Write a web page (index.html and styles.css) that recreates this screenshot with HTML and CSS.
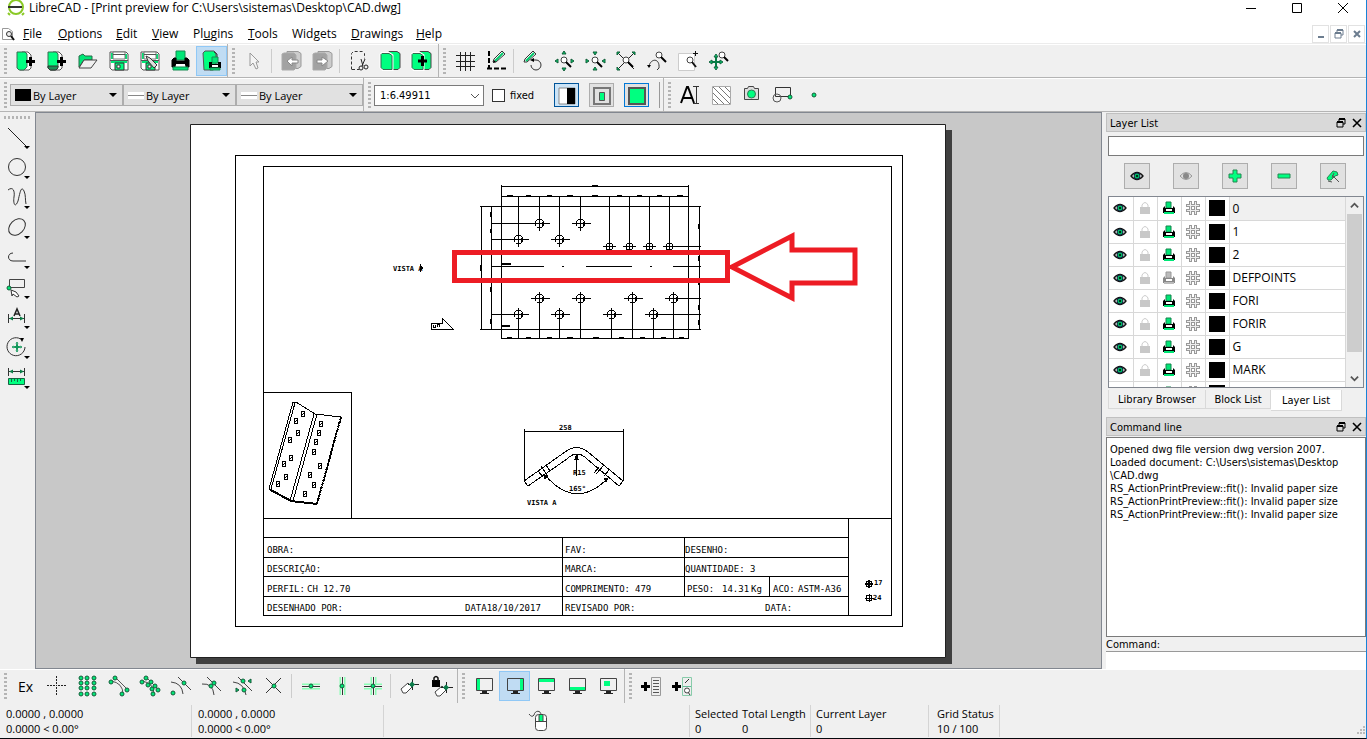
FILE: index.html
```html
<!DOCTYPE html>
<html lang="en">
<head>
<meta charset="utf-8">
<title>LibreCAD - [Print preview for C:\Users\sistemas\Desktop\CAD.dwg]</title>
<link rel="stylesheet" href="styles.css">
</head>
<body>
<svg class="defs" aria-hidden="true">
  <defs>
    <symbol id="new" viewBox="0 0 24 24"><path d="M8 3h6l3 3v13l-2 2H6z" fill="#fff" stroke="#555"/><path d="M3 3h8l2 2v13l-3 3H5l-2-2z" fill="#00ff80" stroke="#3a6b52"/><path d="M12 12.500h9M16.500 8v9" stroke="#000" stroke-width="3"/></symbol>
    <symbol id="template" viewBox="0 0 24 24"><path d="M8 3h6l3 3v13l-2 2H6z" fill="#fff" stroke="#555"/><path d="M3 3h8l2 2v13l-3 3H5l-2-2z" fill="#00ff80" stroke="#3a6b52"/><path d="M3 17h10v2l-2 2H5l-2-2z" fill="#1d8c55" stroke="#333"/><path d="M12 12.500h9M16.500 8v9" stroke="#000" stroke-width="3"/></symbol>
    <symbol id="open" viewBox="0 0 24 24"><path d="M3 18V7l4-2 2 2h7v4H8z" fill="#00e676" stroke="#276b48"/><path d="M3 19l5-8h13l-6 8z" fill="#f0f0f0" stroke="#444"/></symbol>
    <symbol id="save" viewBox="0 0 24 24"><path d="M3 3h16l2 2v16H5l-2-2z" fill="#fff" stroke="#555"/><path d="M4 4h2v6H4zM18 5h2v5h-2zM4 12h16v2H4z" fill="#00e676"/><path d="M6 3h12v7H6z" fill="#fff" stroke="#777"/><path d="M6 5.500h12M3 11.500h18" stroke="#555"/><path d="M8 14h9v7H8z" fill="#00ff80" stroke="#333"/><path d="M10 16h3v3h-3z" fill="#fff" stroke="#333"/></symbol>
    <symbol id="saveas" viewBox="0 0 24 24"><use href="#save"/><path d="M8 7l2 5 6 7 3-3-7-7z" fill="#ddd" stroke="#333"/></symbol>
    <symbol id="print" viewBox="0 0 24 24"><path d="M7 2h9v9H7z" fill="#00e676" stroke="#178a50"/><path d="M5 9h2v3h9V9h2l2 2v7h-3v-2H6v2H3v-7z" fill="#000" stroke="#000"/><path d="M7 15h9v2H7z" fill="#fff"/><path d="M4 18h15v3H4z" fill="#00e676" stroke="#178a50"/></symbol>
    <symbol id="preview" viewBox="0 0 24 24"><path d="M3 4l2-2h9l2 2v15l-3 2H4z" fill="#00ff80" stroke="#555"/><path d="M14 3l3 2v5" fill="none" stroke="#333"/><path d="M12 8h6v6h-6z" fill="#00e676" stroke="#178a50"/><path d="M9 13h3v2h6v-2h3v6H9z"/><path d="M12 16h6v2h-6z" fill="#fff"/><path d="M10 19h10v2H10z" fill="#00e676" stroke="#178a50"/></symbol>
    <symbol id="cursor" viewBox="0 0 24 24"><path d="M8 4v13l3-3 3 6 2-1-2-6h3z" fill="#f4f4f4" stroke="#999"/></symbol>
    <symbol id="undo" viewBox="0 0 24 24"><path d="M8 2.500h11l3 2v13l-3 2H8z" fill="#ccc" stroke="#999"/><path d="M3 5l2-1h10l2 2v13l-2 2H3z" fill="#a2a2a2" stroke="#aaa"/><path d="M13 11V8l-5 4 5 5v-3h6v-3z" fill="#fff" stroke="#888"/></symbol>
    <symbol id="redo" viewBox="0 0 24 24"><path d="M8 2.500h11l3 2v13l-3 2H8z" fill="#ccc" stroke="#999"/><path d="M3 5l2-1h10l2 2v13l-2 2H3z" fill="#a2a2a2" stroke="#aaa"/><path d="M12 11V8l6 4-6 5v-3H7v-3z" fill="#fff" stroke="#888"/></symbol>
    <symbol id="cut" viewBox="0 0 24 24"><path d="M4.500 20.500v-16l2-2h9l2 2v5M5 20.500h7" fill="none" stroke="#333" stroke-dasharray="3 2"/><path d="M14 10l2 7M18 10l-3 7" stroke="#222"/><circle cx="14" cy="19" r="2" fill="none" stroke="#222"/><circle cx="19" cy="18" r="2" fill="none" stroke="#222"/></symbol>
    <symbol id="copy" viewBox="0 0 24 24"><path d="M11 2.500h8l3 2v14l-2 2h-8z" fill="#00ff80" stroke="#444"/><path d="M4 4.500h7l3 2v14H5l-2-2v-13z" fill="#00ff80" stroke="#fff" stroke-width="3"/><path d="M4 4.500h7l3 2v14H5l-2-2v-13z" fill="#00ff80" stroke="#356b50"/></symbol>
    <symbol id="paste" viewBox="0 0 24 24"><use href="#copy"/><path d="M9 12h9M13.500 7v10" stroke="#000" stroke-width="3"/></symbol>
    <symbol id="grid" viewBox="0 0 24 24"><path d="M3 6.500h19M3 12.500h19M3 17.500h19M7.500 3v19M12.500 3v19M17.500 3v19" stroke="#222"/></symbol>
    <symbol id="draft" viewBox="0 0 24 24"><path d="M5 2v17M3 19.500h19" stroke="#000" stroke-width="2" stroke-dasharray="5 2"/><path d="M9 13l1-3 8-8 3 3-9 8z" fill="#fff" stroke="#333"/><path d="M11 12l8-8" stroke="#00c96a" stroke-width="2"/><path d="M9 14l3-1-2-2z"/></symbol>
    <symbol id="redraw" viewBox="0 0 24 24"><path d="M3 13l1-3 8-8 3 3-9 8z" fill="#fff" stroke="#333"/><path d="M5 12l8-8" stroke="#00c96a" stroke-width="2"/><path d="M10 16a5 5 0 1 0 5-5h-3" fill="none" stroke="#333"/><path d="M9 11l4-2v4z"/></symbol>
    <symbol id="lens" viewBox="0 0 24 24"><circle cx="12" cy="11" r="3" fill="#fff" stroke="#444"/><path d="M14 13l5 5" stroke="#000" stroke-width="2"/></symbol>
    <symbol id="zin" viewBox="0 0 24 24"><path d="M10 5l2-3 2 3zM10 19l2 3 2-3zM6 10l-3 2 3 2zM19 10l3 2-3 2z" fill="#00c96a" stroke="#145c39"/><use href="#lens"/></symbol>
    <symbol id="zout" viewBox="0 0 24 24"><path d="M10 3h4l-2 3zM10 21h4l-2-3zM3 10v4l3-2zM22 10v4l-3-2z" fill="#00c96a" stroke="#145c39"/><use href="#lens"/></symbol>
    <symbol id="zauto" viewBox="0 0 24 24"><path d="M4 4l16 16M4 20L20 4" stroke="#222"/><path d="M3 3h3L3 6zM21 3v3l-3-3zM3 21v-3l3 3z" fill="#00c96a" stroke="#145c39"/><use href="#lens"/></symbol>
    <symbol id="zprev" viewBox="0 0 24 24"><path d="M4 17c2-8 11-8 10 2l-2 2" fill="none" stroke="#333"/><path d="M2 16h4l-2 3z"/><circle cx="14" cy="6" r="3" fill="#fff" stroke="#444"/><path d="M16 8l5 5" stroke="#000" stroke-width="2"/></symbol>
    <symbol id="zwin" viewBox="0 0 24 24"><path d="M2.500 4.500h16v17h-16z" fill="#fff" stroke="#ccc"/><circle cx="14" cy="11" r="3" fill="#fff" stroke="#444"/><path d="M16 13l4 5" stroke="#111" stroke-width="2"/><path d="M19.500 2v5M17 4.500h5" stroke="#111"/></symbol>
    <symbol id="pan" viewBox="0 0 24 24"><path d="M9 7v12M3 13h12" stroke="#087c45" stroke-width="2"/><path d="M7 8l2-3 2 3zM7 18h4l-2 3zM5 11v4l-3-2zM13 11v4l3-2z" fill="#00d976" stroke="#16633f"/><circle cx="15" cy="6" r="3" fill="#fff" stroke="#444"/><path d="M17 8l4 4" stroke="#000" stroke-width="2"/></symbol>
    <symbol id="bw" viewBox="0 0 24 24"><path d="M4 4h16v16H4z" fill="#fff" stroke="#888"/><path d="M12 4h8v16h-8z"/></symbol>
    <symbol id="center" viewBox="0 0 24 24"><path d="M4 4h16v16H4z" fill="none" stroke="#777" stroke-width="2"/><path d="M9.500 8.500h5v8h-5z" fill="#00ff80" stroke="#555"/></symbol>
    <symbol id="fit" viewBox="0 0 24 24"><path d="M4 4h16v16H4z" fill="#00ff80" stroke="#555" stroke-width="2"/></symbol>
    <symbol id="text" viewBox="0 0 24 24"><path d="M3 20L9 4h1l6 16M5 15h9" fill="none" stroke="#000" stroke-width="2"/><path d="M15 3.500h6M18.500 4v16M15 20.500h6" stroke="#333"/></symbol>
    <symbol id="hatch" viewBox="0 0 24 24"><path d="M3.500 3.500h18v18h-18z" fill="#fff" stroke="#aaa"/><path d="M4 16l5 5M4 10l11 11M4 4l17 17M10 4l11 11M16 4l5 5" stroke="#777"/></symbol>
    <symbol id="camera" viewBox="0 0 24 24"><path d="M4.500 5.500h3l1-2h5l1 2h4v11h-14z" fill="#ddd" stroke="#444"/><circle cx="11.500" cy="11" r="4" fill="#00ff80" stroke="#367555"/></symbol>
    <symbol id="block" viewBox="0 0 24 24"><path d="M4.500 4.500h15v9h-15z" fill="none" stroke="#333"/><circle cx="6" cy="15" r="4" fill="none" stroke="#555"/><use href="#pt" x="19" y="14"/></symbol>
    <symbol id="point" viewBox="0 0 24 24"><use href="#pt" x="12" y="12"/></symbol>
    <circle id="pt" r="2" fill="#00e676" stroke="#165c3a"/>
    <symbol id="line" viewBox="0 0 24 24"><path d="M3 3l18 18" stroke="#222"/></symbol>
    <symbol id="circle" viewBox="0 0 24 24"><circle cx="12" cy="12" r="8.500" fill="none" stroke="#333"/></symbol>
    <symbol id="curve" viewBox="0 0 24 24"><path d="M3 5c5-4 7 1 6 7s1 12 4 4c2-8 3-16 6-10 2 4 1 9 2 13" fill="none" stroke="#333"/></symbol>
    <symbol id="ellipse" viewBox="0 0 24 24"><ellipse cx="12" cy="12" rx="9.500" ry="7" transform="rotate(-45 12 12)" fill="none" stroke="#333"/></symbol>
    <symbol id="poly" viewBox="0 0 24 24"><path d="M8 8c-6 0-6 8 0 8h13" fill="none" stroke="#333"/></symbol>
    <symbol id="select" viewBox="0 0 24 24"><path d="M4.500 4.500h15v8h-15z" fill="none" stroke="#444"/><use href="#pt" x="4" y="13"/><path d="M6 15l5 2 3 4-2 1-4-3-1 2z" fill="#fff" stroke="#333"/></symbol>
    <symbol id="dim" viewBox="0 0 24 24"><path d="M3.500 9v9M19.500 9v9M4 13.500h15" stroke="#333"/><path d="M4 13.500l4-2v4zM19 13.500l-4-2v4z" fill="#087c45"/><path d="M9 11l3-7 3 7M10 9h4" fill="none" stroke="#222" stroke-width="1.500"/></symbol>
    <symbol id="modify" viewBox="0 0 24 24"><path d="M17 5a9 9 0 1 0 3 7" fill="none" stroke="#333"/><path d="M15 3l4 0-2 4z"/><path d="M12 7v10M7 12h10" stroke="#10995a" stroke-width="2"/><path d="M11 9l1-2 1 2zM11 15h2l-1 2zM9 11v2l-2-1zM15 11v2l2-1z" fill="#00d976" stroke="#4aa87c"/></symbol>
    <symbol id="measure" viewBox="0 0 24 24"><path d="M3.500 3v8M19.500 3v8M4 6.500h15" stroke="#333"/><path d="M4 6.500l4-2v4zM19 6.500l-4-2v4z" fill="#087c45"/><path d="M3.500 13.500h16v6h-16z" fill="#00ff80" stroke="#176342"/><path d="M6.500 14v3M9.500 14v2M12.500 14v3M15.500 14v2" stroke="#176342"/></symbol>
    <symbol id="eye" viewBox="0 0 16 16"><path d="M2 8q6-7 12 0q-6 7-12 0z" fill="#fff" stroke="#111" stroke-width="1.300"/><circle cx="8" cy="8" r="3" fill="#00b863" stroke="#124"/><circle cx="8" cy="8" r="1"/></symbol>
    <symbol id="eyeoff" viewBox="0 0 16 16"><path d="M2 8q6-7 12 0q-6 7-12 0z" fill="#ddd" stroke="#999"/><circle cx="8" cy="8" r="3" fill="#888"/></symbol>
    <symbol id="lock" viewBox="0 0 16 16"><path d="M5 8V5q3-5 6 0v3" fill="none" stroke="#ccc"/><path d="M3 7h10v7H3z" fill="#c8c8c8"/></symbol>
    <symbol id="pr" viewBox="0 0 16 16"><path d="M5 2h5v6H5z" fill="#00e676" stroke="#15824c"/><path d="M4 6v2h8V6l2 2v5H2V8z"/><path d="M5 9h6v2H5z" fill="#fff"/><path d="M3 12h10v2H3z" fill="#00e676"/></symbol>
    <symbol id="proff" viewBox="0 0 16 16"><path d="M5 2h5v6H5z" fill="#bbb" stroke="#999"/><path d="M4 6v2h8V6l2 2v5H2V8z" fill="#888"/><path d="M5 9h6v2H5z" fill="#fff"/><path d="M3 12h10v2H3z" fill="#bbb"/></symbol>
    <symbol id="hash" viewBox="0 0 16 16"><path d="M1 5.500h14M1 10.500h14M5.500 1v14M10.500 1v14" stroke="#999" stroke-width="3"/><path d="M2 5.500h12M2 10.500h12M5.500 2v12M10.500 2v12" stroke="#eee"/></symbol>
    <symbol id="add" viewBox="0 0 16 16"><path d="M6 2h4v4h4v4h-4v4H6v-4H2V6h4z" fill="#00ff80" stroke="#278653"/></symbol>
    <symbol id="remove" viewBox="0 0 16 16"><path d="M2 6h12v4H2z" fill="#00ff80" stroke="#278653"/></symbol>
    <symbol id="edit" viewBox="0 0 16 16"><path d="M2 10l6-7 4 1 1 3-3 1-4 4H3z" fill="#00ff80" stroke="#278653"/><path d="M7 7l7 7M9 5l-2 5M3 13l4 1" stroke="#555"/></symbol>
    <symbol id="free" viewBox="0 0 24 24"><path d="M2 11.500h8M13 11.500h8M11.500 2v8M11.500 13v8" stroke="#222" stroke-dasharray="2 1"/><path d="M11 11.500h1" stroke="#222"/></symbol>
    <symbol id="snapgrid" viewBox="0 0 24 24"><g id="dots"><use href="#pt" x="5" y="4"/><use href="#pt" x="5" y="9"/><use href="#pt" x="5" y="14"/><use href="#pt" x="5" y="20"/></g><use href="#dots" x="6"/><use href="#dots" x="13"/></symbol>
    <symbol id="endp" viewBox="0 0 24 24"><path d="M4 7q12 2 12 13M8 3l12 12" fill="none" stroke="#555"/><use href="#pt" x="4" y="8"/><use href="#pt" x="8" y="4"/><use href="#pt" x="20" y="16"/><use href="#pt" x="15" y="20"/></symbol>
    <symbol id="onent" viewBox="0 0 24 24"><use href="#endp"/><use href="#pt" x="13" y="8"/><use href="#pt" x="17" y="12"/><use href="#pt" x="10" y="11"/><use href="#pt" x="14" y="15"/></symbol>
    <symbol id="cen" viewBox="0 0 24 24"><path d="M2 8q11 1 12 12M9 3l13 13" fill="none" stroke="#444"/><use href="#pt" x="15" y="9"/><use href="#pt" x="4" y="19"/></symbol>
    <symbol id="mid" viewBox="0 0 24 24"><path d="M2 10q11-1 12 11M7 3l14 14" fill="none" stroke="#444"/><use href="#pt" x="14" y="9"/><use href="#pt" x="11" y="12"/></symbol>
    <symbol id="dist" viewBox="0 0 24 24"><path d="M2 8q11 1 13 13M7 3l14 14" fill="none" stroke="#444"/><path d="M17 7l3-2v4zM5 14l3 2-3 2z" fill="#00c96a" stroke="#165c3a"/><use href="#pt" x="12" y="7"/><use href="#pt" x="13" y="16"/></symbol>
    <symbol id="inter" viewBox="0 0 24 24"><path d="M4 4l15 15M19 4L4 19" stroke="#333"/><use href="#pt" x="12" y="12"/></symbol>
    <symbol id="hor" viewBox="0 0 24 24"><path d="M3 12.500h18" stroke="#8affb5" stroke-width="6"/><path d="M3 12.500h18" stroke="#f0f0f0" stroke-width="3"/><path d="M3 12.500h18" stroke="#333"/><use href="#pt" x="12" y="12"/></symbol>
    <symbol id="ver" viewBox="0 0 24 24"><path d="M12.500 3v18" stroke="#8affb5" stroke-width="6"/><path d="M12.500 3v18" stroke="#f0f0f0" stroke-width="3"/><path d="M12.500 3v18" stroke="#333"/><use href="#pt" x="12" y="12"/></symbol>
    <symbol id="ortho" viewBox="0 0 24 24"><path d="M3 12.500h18M12.500 3v18" stroke="#8affb5" stroke-width="6"/><path d="M3 12.500h18M12.500 3v18" stroke="#f0f0f0" stroke-width="3"/><path d="M3 12.500h18M12.500 3v18" stroke="#333"/><use href="#pt" x="12" y="12"/></symbol>
    <symbol id="rel" viewBox="0 0 24 24"><path d="M3 15l7-6 4 4-6 6h-3z" fill="#fff" stroke="#444"/><path d="M10 10.500h11M14.500 5v11" stroke="#222"/><path d="M11 10.500l3-3 3 3-3 3z" fill="#0b7c49"/></symbol>
    <symbol id="rellock" viewBox="0 0 24 24"><path d="M3 6h8v7H3z"/><path d="M5 7V4q2-3 4 0v3" fill="none" stroke="#111" stroke-width="1.500"/><path d="M6 18l7-6 4 4-6 6H8z" fill="#fff" stroke="#444"/><path d="M12 13.500h12M17.500 8v11" stroke="#222"/><path d="M14 13.500l3-3 3 3-3 3z" fill="#0b7c49"/></symbol>
    <symbol id="mon" viewBox="0 0 24 24"><path d="M4.500 4.500h16v12h-16z" fill="none" stroke="#444"/><path d="M10 17h5v2h2v1H8v-1h2z" fill="#222"/></symbol>
    <symbol id="dl" viewBox="0 0 24 24"><path d="M5 5h3v11H5z" fill="#00ff80"/><use href="#mon"/></symbol>
    <symbol id="dr" viewBox="0 0 24 24"><path d="M17 5h3v11h-3z" fill="#00ff80"/><use href="#mon"/></symbol>
    <symbol id="dt" viewBox="0 0 24 24"><path d="M5 5h15v3H5z" fill="#00ff80"/><use href="#mon"/></symbol>
    <symbol id="db" viewBox="0 0 24 24"><path d="M5 13h15v3H5z" fill="#00ff80"/><use href="#mon"/></symbol>
    <symbol id="df" viewBox="0 0 24 24"><path d="M8 7h6v5H8z" fill="#00ff80"/><use href="#mon"/></symbol>
    <symbol id="addlist" viewBox="0 0 24 24"><path d="M2 12.500h9M6.500 8v9" stroke="#000" stroke-width="3"/><path d="M12.500 3.500h9v18h-9z" fill="#eee" stroke="#999"/><path d="M14 6.500h6M14 9.500h6M14 12.500h6M14 15.500h6M14 18.500h6" stroke="#555"/></symbol>
    <symbol id="addtool" viewBox="0 0 24 24"><path d="M2 12.500h9M6.500 8v9" stroke="#000" stroke-width="3"/><path d="M12.500 3.500h9v18h-9z" fill="#eee" stroke="#8ca"/><path d="M13 12.500h8" stroke="#6b9"/><path d="M15 9l4-4M18 18l2 3" stroke="#333"/><circle cx="17" cy="16.500" r="2.500" fill="#fff" stroke="#444"/></symbol>
    <symbol id="float" viewBox="0 0 12 12"><path d="M4 4V2h6v5H8M2 5h6v5H2z" fill="none" stroke="currentColor"/><path d="M4 2h6M2 5h6" stroke="currentColor" stroke-width="2"/></symbol>
    <symbol id="close" viewBox="0 0 12 12"><path d="M2 2l8 8M10 2l-8 8" stroke="currentColor" stroke-width="1.600"/></symbol>
    <g id="hole"><circle r="4.500"/><path d="M-9 0H10M0-7V7M3-2V2"/></g>
    <g id="tap"><circle r="3.500"/><path d="M-7 0H6M0-4V4"/></g>
    <g id="iso"><ellipse rx="2" ry="2.500"/><path d="M-1 1L1-1"/></g>
  </defs>
</svg>

<div class="window">
  <header class="titlebar">
    <svg class="logo" viewBox="0 0 18 16"><circle cx="9" cy="7" r="7" fill="none" stroke="#8ac926" stroke-width="2"/><path d="M3 15L1 13M15 15l2-2" stroke="#8ac926" stroke-width="2"/><path d="M1 7h14" stroke="#333" stroke-width="2"/></svg>
    <h1>LibreCAD - [Print preview for C:\Users\sistemas\Desktop\CAD.dwg]</h1>
    <div class="winbtns">
      <button aria-label="Minimize"><svg viewBox="0 0 12 12"><path d="M1 6.500h10" stroke="#000"/></svg></button>
      <button aria-label="Maximize"><svg viewBox="0 0 12 12"><path d="M1.500 1.500h9v9h-9z" fill="none" stroke="#000"/></svg></button>
      <button aria-label="Close"><svg viewBox="0 0 12 12"><path d="M1 1l10 10M11 1L1 11" stroke="#000"/></svg></button>
    </div>
  </header>

  <nav class="menubar">
    <svg class="docicon" viewBox="0 0 14 14"><path d="M1.500 1.500h6l4 3v8h-10z" fill="#fff" stroke="#999"/><circle cx="8" cy="7" r="2.500" fill="#eee" stroke="#333"/><path d="M10 9l3 4" stroke="#111" stroke-width="2"/></svg>
    <div class="menus">
      <button><u>F</u>ile</button><button><u>O</u>ptions</button><button><u>E</u>dit</button><button><u>V</u>iew</button><button>Pl<u>u</u>gins</button><button><u>T</u>ools</button><button>Widgets</button><button><u>D</u>rawings</button><button><u>H</u>elp</button>
    </div>
    <div class="mdi">
      <button aria-label="Minimize document"><svg viewBox="0 0 12 12"><path d="M3 9h6" stroke="currentColor" stroke-width="2"/></svg></button>
      <button aria-label="Restore document"><svg><use href="#float"/></svg></button>
      <button aria-label="Close document"><svg viewBox="0 0 12 12"><path d="M3 3l6 6M9 3l-6 6" stroke="currentColor" stroke-width="2"/></svg></button>
    </div>
  </nav>

  <div class="toolbar">
    <div class="group"><i class="grip"></i>
      <button aria-label="New"><svg><use href="#new"/></svg></button><button aria-label="New from template"><svg><use href="#template"/></svg></button><button aria-label="Open"><svg><use href="#open"/></svg></button><button aria-label="Save"><svg><use href="#save"/></svg></button><button aria-label="Save as"><svg><use href="#saveas"/></svg></button><button aria-label="Print"><svg><use href="#print"/></svg></button><button class="on" aria-label="Print preview"><svg><use href="#preview"/></svg></button>
    </div>
    <div class="group roomy"><i class="grip"></i>
      <button aria-label="Select"><svg><use href="#cursor"/></svg></button><i class="sep"></i><button aria-label="Undo"><svg><use href="#undo"/></svg></button><button aria-label="Redo"><svg><use href="#redo"/></svg></button><i class="sep"></i><button aria-label="Cut"><svg><use href="#cut"/></svg></button><button aria-label="Copy"><svg><use href="#copy"/></svg></button><button aria-label="Paste"><svg><use href="#paste"/></svg></button>
    </div>
    <div class="group last"><i class="grip"></i>
      <button aria-label="Grid"><svg><use href="#grid"/></svg></button><button aria-label="Draft"><svg><use href="#draft"/></svg></button><i class="sep"></i><button aria-label="Redraw"><svg><use href="#redraw"/></svg></button><button aria-label="Zoom in"><svg><use href="#zin"/></svg></button><button aria-label="Zoom out"><svg><use href="#zout"/></svg></button><button aria-label="Auto zoom"><svg><use href="#zauto"/></svg></button><button aria-label="Previous view"><svg><use href="#zprev"/></svg></button><button aria-label="Window zoom"><svg><use href="#zwin"/></svg></button><button aria-label="Pan"><svg><use href="#pan"/></svg></button>
    </div>
  </div>

  <div class="toolbar pens">
    <div class="group"><i class="grip"></i>
      <button class="pen"><i class="swatch"></i>By Layer<i class="arrow"></i></button><button class="pen"><i class="rule"></i>By Layer<i class="arrow"></i></button><button class="pen wide"><i class="rule"></i>By Layer<i class="arrow"></i></button>
    </div>
    <div class="group scalebar"><i class="grip"></i>
      <div class="scale"><select aria-label="Scale"><option>1:6.49911</option></select><svg viewBox="0 0 10 10"><path d="M1 3l4 4 4-4" fill="none" stroke="#555"/></svg></div>
      <label class="fixed"><input type="checkbox">fixed</label>
      <button class="box checked" aria-label="Black and white"><svg><use href="#bw"/></svg></button><button class="box" aria-label="Center"><svg><use href="#center"/></svg></button><button class="box focus" aria-label="Fit"><svg><use href="#fit"/></svg></button><i class="endsep"></i>
    </div>
    <div class="group last"><i class="grip"></i>
      <button aria-label="Text"><svg><use href="#text"/></svg></button><button aria-label="Hatch"><svg><use href="#hatch"/></svg></button><button aria-label="Image"><svg><use href="#camera"/></svg></button><button aria-label="Block"><svg><use href="#block"/></svg></button><button aria-label="Point"><svg><use href="#point"/></svg></button>
    </div>
  </div>

  <main class="work">
    <div class="tools"><i class="grip flat"></i>
      <button aria-label="Line"><svg><use href="#line"/></svg><i class="arrow"></i></button><button aria-label="Circle"><svg><use href="#circle"/></svg><i class="arrow"></i></button><button aria-label="Curve"><svg><use href="#curve"/></svg><i class="arrow"></i></button><button aria-label="Ellipse"><svg><use href="#ellipse"/></svg><i class="arrow"></i></button><button aria-label="Polyline"><svg><use href="#poly"/></svg><i class="arrow"></i></button><button aria-label="Select"><svg><use href="#select"/></svg><i class="arrow"></i></button><button aria-label="Dimension"><svg><use href="#dim"/></svg><i class="arrow"></i></button><button aria-label="Modify"><svg><use href="#modify"/></svg><i class="arrow"></i></button><button aria-label="Info"><svg><use href="#measure"/></svg><i class="arrow"></i></button>
    </div>

    <section class="canvas">
      <svg class="drawing" width="1065" height="555" viewBox="36 113 1065 555">
        <path d="M196 130h756v534H196z" fill="#404040"/>
        <path d="M190.500 124.500h755v533h-755z" fill="#fff" stroke="#222"/>
        <g class="ink">
          <path d="M235.500 155.500h667v471h-667zM263.500 166.500h628v449h-628zM263.500 518.500h628M263.500 537.500h585M263.500 557.500h585M263.500 576.500h585M263.500 596.500h585M562.500 537v78M684.500 537v59M769.500 576v20M848.500 518v97M263.500 392.500h88v126"/>
          <path d="M501.500 186.500h187M501.500 196.500h187M480 206.500h221M480 329.500h221M501.500 338.500h187M501.500 185v154M688.500 185v154M481.500 206v123M491.500 206v123M699.500 206v123"/>
          <path d="M518.500 196v51M539.500 196v35M559.500 196v51M580.500 196v35M609.500 196v54M629.500 196v54M649.500 196v54M669.500 196v54M491 223.500h57M491 239.500h34M669 246.500h32M491 314.500h27M673 298.500h28M653 314.500h48M518.500 314v25M539.500 298v41M559.500 314v25M580.500 298v41M611.500 314v25M632.500 298v41M653.500 314v25M673.500 298v41"/>
          <path d="M491 266.500h53M562 266.500h2M586 266.500h46M650 266.500h2M673 266.500h28"/>
          <path d="M592 185.500h6M507 195.500h6M526 195.500h5M547 195.500h5M567 195.500h6M592 195.500h6M617 195.500h5M637 195.500h5M657 195.500h5M677 195.500h6M507 337.500h5M526 337.500h5M547 337.500h5M567 337.500h6M593 337.500h6M619 337.500h5M640 337.500h5M661 337.500h5M679 337.500h5M490.500 212v5M490.500 229v4M480.500 265v6M490.500 287v5M490.500 319v5M698.500 224v5M698.500 256v5M698.500 281v4M698.500 305v5M698.500 320v5"/><path stroke-width="2" d="M502 264h9M502 326h8"/>
          <use href="#hole" x="539.500" y="223.500"/><use href="#hole" x="580.500" y="223.500"/><use href="#hole" x="518.500" y="239.500"/><use href="#hole" x="559.500" y="239.500"/>
          <use href="#tap" x="609.500" y="246.500"/><use href="#tap" x="629.500" y="246.500"/><use href="#tap" x="649.500" y="246.500"/><use href="#tap" x="669.500" y="246.500"/>
          <use href="#hole" x="539.500" y="298.500"/><use href="#hole" x="580.500" y="298.500"/><use href="#hole" x="632.500" y="298.500"/><use href="#hole" x="673.500" y="298.500"/><use href="#hole" x="518.500" y="314.500"/><use href="#hole" x="559.500" y="314.500"/><use href="#hole" x="611.500" y="314.500"/><use href="#hole" x="653.500" y="314.500"/>
          <path d="M420.500 264v8"/><path d="M420 265l3 3-3 3z" fill="#000"/><path d="M431.500 329.500h22l-11-11v5h-11zM433 325v2h2v-2M437 327v-3h2v3"/>
          <path d="M293 402h3l19 12 26 3-24 87-27-3-21-12zM295 403l-24 86M314 414l-24 87M317 414l-24 87"/><path stroke-width="2" d="M269 489l22 12 26 3"/><path stroke-width="2" stroke-dasharray="3 1" d="M341 417l-24 87"/>
          <use href="#iso" x="303" y="414"/><use href="#iso" x="296" y="421"/><use href="#iso" x="298" y="433"/><use href="#iso" x="290" y="440"/><use href="#iso" x="291" y="458"/><use href="#iso" x="284" y="464"/><use href="#iso" x="286" y="477"/><use href="#iso" x="278" y="484"/><use href="#iso" x="321" y="424"/><use href="#iso" x="319" y="433"/><use href="#iso" x="316" y="442"/><use href="#iso" x="314" y="452"/><use href="#iso" x="320" y="466"/><use href="#iso" x="310" y="475"/><use href="#iso" x="314" y="485"/><use href="#iso" x="305" y="494"/>
          <path d="M524.500 429v52M623.500 429v52M524.500 431.500h99M524 481l41-29q11-9 23 0l35 29-4 5-32-27q-10-10-20 0l-39 27zM576.500 454v22M545 475q31 36 63 3M538 471l5 6M541 466l6 9M546 465l4 6M599 467l-5 6M604 465l-8 9M609 470l-5 6"/><path d="M544 475l4 1-3 3zM608 478l-4 0 2 4zM575 459l2-5 1 5z" fill="#000"/>
          <circle cx="869" cy="584" r="3"/><circle cx="869" cy="598" r="3"/><path stroke-width="2" d="M865 584h8M869 580v8"/><path d="M865 598.500h9M869.500 594v8"/>
        </g>
        <g class="cadtext">
          <text x="267" y="553">OBRA:</text><text x="267" y="572">DESCRIÇÃO:</text><text x="267" y="592">PERFIL:</text><text x="307" y="592">CH 12.70</text><text x="267" y="611">DESENHADO POR:</text><text x="465" y="611">DATA18/10/2017</text>
          <text x="565" y="553">FAV:</text><text x="565" y="572">MARCA:</text><text x="565" y="592">COMPRIMENTO:</text><text x="635" y="592">479</text><text x="565" y="611">REVISADO POR:</text><text x="765" y="611">DATA:</text>
          <text x="685" y="553">DESENHO:</text><text x="685" y="572">QUANTIDADE:</text><text x="750" y="572">3</text><text x="687" y="592">PESO:</text><text x="722" y="592">14.31</text><text x="751" y="592">Kg</text><text x="773" y="592">ACO:</text><text x="798" y="592">ASTM-A36</text>
        </g>
        <g class="cadtext small"><text x="393" y="271">VISTA A</text><text x="527" y="505">VISTA A</text><text x="559" y="430">258</text><text x="573" y="475">R15</text><text x="569" y="491">165°</text><text x="874" y="585">17</text><text x="873" y="600">24</text></g>
        <path d="M454.500 252.500h273v28h-273zM732 267l60-31v14h63v33h-63v15z" fill="none" stroke="#ed1c24" stroke-width="5"/>
      </svg>
    </section>

    <aside class="docks">
      <section>
        <h2>Layer List<span><button aria-label="Float layers"><svg><use href="#float"/></svg></button><button aria-label="Close layers"><svg><use href="#close"/></svg></button></span></h2>
        <div class="layers">
          <input type="text" class="filter" aria-label="Filter layers">
          <div class="actions"><button aria-label="Show all"><svg><use href="#eye"/></svg></button><button aria-label="Hide all"><svg><use href="#eyeoff"/></svg></button><button aria-label="Add layer"><svg><use href="#add"/></svg></button><button aria-label="Remove layer"><svg><use href="#remove"/></svg></button><button aria-label="Edit layer"><svg><use href="#edit"/></svg></button></div>
          <div class="list">
            <table>
              <tr class="current"><td><svg><use href="#eye"/></svg></td><td><svg><use href="#lock"/></svg></td><td><svg><use href="#pr"/></svg></td><td><svg><use href="#hash"/></svg></td><td><i></i></td><td>0</td></tr>
              <tr><td><svg><use href="#eye"/></svg></td><td><svg><use href="#lock"/></svg></td><td><svg><use href="#pr"/></svg></td><td><svg><use href="#hash"/></svg></td><td><i></i></td><td>1</td></tr>
              <tr><td><svg><use href="#eye"/></svg></td><td><svg><use href="#lock"/></svg></td><td><svg><use href="#pr"/></svg></td><td><svg><use href="#hash"/></svg></td><td><i></i></td><td>2</td></tr>
              <tr><td><svg><use href="#eye"/></svg></td><td><svg><use href="#lock"/></svg></td><td><svg><use href="#proff"/></svg></td><td><svg><use href="#hash"/></svg></td><td><i></i></td><td>DEFPOINTS</td></tr>
              <tr><td><svg><use href="#eye"/></svg></td><td><svg><use href="#lock"/></svg></td><td><svg><use href="#pr"/></svg></td><td><svg><use href="#hash"/></svg></td><td><i></i></td><td>FORI</td></tr>
              <tr><td><svg><use href="#eye"/></svg></td><td><svg><use href="#lock"/></svg></td><td><svg><use href="#pr"/></svg></td><td><svg><use href="#hash"/></svg></td><td><i></i></td><td>FORIR</td></tr>
              <tr><td><svg><use href="#eye"/></svg></td><td><svg><use href="#lock"/></svg></td><td><svg><use href="#pr"/></svg></td><td><svg><use href="#hash"/></svg></td><td><i></i></td><td>G</td></tr>
              <tr><td><svg><use href="#eye"/></svg></td><td><svg><use href="#lock"/></svg></td><td><svg><use href="#pr"/></svg></td><td><svg><use href="#hash"/></svg></td><td><i></i></td><td>MARK</td></tr>
              <tr><td><svg><use href="#eye"/></svg></td><td><svg><use href="#lock"/></svg></td><td><svg><use href="#pr"/></svg></td><td><svg><use href="#hash"/></svg></td><td><i></i></td><td></td></tr>
            </table>
            <div class="scroll"><svg viewBox="0 0 10 10"><path d="M1 7l4-4 4 4" fill="none" stroke="#555" stroke-width="2"/></svg><i></i><svg viewBox="0 0 10 10"><path d="M1 3l4 4 4-4" fill="none" stroke="#555" stroke-width="2"/></svg></div>
          </div>
        </div>
        <div class="tabs"><button>Library Browser</button><button>Block List</button><button class="active">Layer List</button></div>
      </section>
      <section class="command">
        <h2>Command line<span><button aria-label="Float command line"><svg><use href="#float"/></svg></button><button aria-label="Close command line"><svg><use href="#close"/></svg></button></span></h2>
        <div class="log">Opened dwg file version dwg version 2007.<br>Loaded document: C:\Users\sistemas\Desktop<br>\CAD.dwg<br>RS_ActionPrintPreview::fit(): Invalid paper size<br>RS_ActionPrintPreview::fit(): Invalid paper size<br>RS_ActionPrintPreview::fit(): Invalid paper size</div>
        <label for="cmd">Command:</label>
        <input type="text" id="cmd">
      </section>
    </aside>
  </main>

  <div class="toolbar snap">
    <div class="group"><i class="grip"></i>
      <button class="ex">Ex</button><button aria-label="Free snap"><svg><use href="#free"/></svg></button><button aria-label="Snap on grid"><svg><use href="#snapgrid"/></svg></button><button aria-label="Snap endpoints"><svg><use href="#endp"/></svg></button><button aria-label="Snap on entity"><svg><use href="#onent"/></svg></button><button aria-label="Snap center"><svg><use href="#cen"/></svg></button><button aria-label="Snap middle"><svg><use href="#mid"/></svg></button><button aria-label="Snap distance"><svg><use href="#dist"/></svg></button><button aria-label="Snap intersection"><svg><use href="#inter"/></svg></button><i class="sep"></i><button aria-label="Restrict horizontal"><svg><use href="#hor"/></svg></button><button aria-label="Restrict vertical"><svg><use href="#ver"/></svg></button><button aria-label="Restrict orthogonal"><svg><use href="#ortho"/></svg></button><i class="sep"></i><button aria-label="Set relative zero"><svg><use href="#rel"/></svg></button><button aria-label="Lock relative zero"><svg><use href="#rellock"/></svg></button>
    </div>
    <div class="group"><i class="grip"></i>
      <button aria-label="Left dock"><svg><use href="#dl"/></svg></button><button class="on" aria-label="Right dock"><svg><use href="#dr"/></svg></button><button aria-label="Top dock"><svg><use href="#dt"/></svg></button><button aria-label="Bottom dock"><svg><use href="#db"/></svg></button><button aria-label="Floating dock"><svg><use href="#df"/></svg></button>
    </div>
    <div class="group last"><i class="grip"></i>
      <button aria-label="Menu creator"><svg><use href="#addlist"/></svg></button><button aria-label="Toolbar creator"><svg><use href="#addtool"/></svg></button>
    </div>
  </div>

  <footer class="status">
    <div class="coord">0.0000 , 0.0000<br>0.0000 &lt; 0.00°</div>
    <div class="coord">0.0000 , 0.0000<br>0.0000 &lt; 0.00°</div>
    <div class="mouse"><svg viewBox="0 0 24 24"><path d="M2 5q3 4 5 1c1-5 7-5 7 0" fill="none" stroke="#444"/><rect x="8.500" y="5.500" width="11" height="16" rx="3" fill="#fff" stroke="#444"/><path d="M12 6h4v6h-4z" fill="#00ff80"/><path d="M9 12.500h10M12 6v6M16 6v6" stroke="#444"/></svg></div>
    <div class="sel"><span>Selected</span><span>Total Length</span><span>0</span><span>0</span></div>
    <div class="layer">Current Layer<br>0</div>
    <div class="gridst">Grid Status<br>10 / 100</div>
    <div class="rest"><svg viewBox="0 0 12 12"><path d="M9 2h2M6 5h2M9 5h2M3 8h2M6 8h2M9 8h2" stroke="#bbb" stroke-width="2"/></svg></div>
  </footer>
</div>
</body>
</html>
```
FILE: styles.css
```css
* { box-sizing: border-box; }

body {
  margin: 0;
  height: 100vh;
  overflow: hidden;
  background: #f0f0f0;
  color: #000;
  font: 12px/15px "Open Sans", "Noto Sans", sans-serif;
}

button, input, select { font: inherit; color: inherit; }
button { padding: 0; border: 0; background: none; }
svg { display: block; flex: none; }
i { font-style: normal; }
.defs { position: absolute; width: 0; height: 0; }

.window {
  display: flex;
  flex-direction: column;
  height: 100vh;
  border-right: 1px solid #1883d7;
  border-bottom: 1px solid #05080c;
}

.titlebar {
  display: flex;
  align-items: center;
  height: 16px;
  padding-left: 7px;
  gap: 4px;
  background: #fff;
}
.titlebar h1 { flex: 1; margin: 0; font-size: 12px; line-height: 16px; font-weight: normal; }
.logo { width: 18px; height: 16px; }
.winbtns { display: flex; }
.winbtns button { display: grid; place-items: center; width: 46px; height: 16px; }
.winbtns svg { width: 12px; height: 14px; }

.menubar {
  display: flex;
  align-items: center;
  height: 28px;
  padding: 8px 1px 0;
  background: #fff;
  border-bottom: 1px solid #ececec;
}
.docicon { width: 14px; height: 14px; margin-right: 8px; }
.menus { display: grid; grid-template-columns: 35px 58px 36px 41px 55px 44px 59px 65px 40px; flex: 1; }
.menus button { text-align: left; }
.mdi { display: flex; gap: 1px; color: #6c7d8f; }
.mdi button { display: grid; place-items: center; width: 17px; height: 18px; border: 1px solid #e2e2e2; }
.mdi svg { width: 12px; height: 12px; }

.toolbar {
  display: flex;
  height: 34px;
  background: #f0f0f0;
  border-bottom: 1px solid #b4b4b4;
  box-shadow: inset 0 1px #fff;
}
.group { display: flex; align-items: center; border-right: 1px solid #b4b4b4; }
.group.last { border-right: 0; }
.group.roomy { padding-right: 2px; }
.group > button { display: grid; place-items: center; width: 31px; height: 30px; }
.group > button svg { width: 24px; height: 24px; }
.group > .on { background: #c0dcf3; border: 1px solid #90c8f6; }
.grip {
  width: 3px;
  height: 26px;
  margin: 0 3px 0 4px;
  background: repeating-linear-gradient(#b4b4b4 0 2px, transparent 2px 4px);
}
.grip.flat {
  width: 26px;
  height: 3px;
  margin: 4px 0 4px 4px;
  background: repeating-linear-gradient(90deg, #b4b4b4 0 2px, transparent 2px 4px);
}
.sep { width: 1px; height: 24px; margin: 0 3px 0 2px; background: #ccc; }

.group > .pen {
  display: flex;
  align-items: center;
  justify-content: flex-start;
  gap: 2px;
  width: 113px;
  height: 22px;
  padding: 0 5px 0 4px;
  background: #e1e1e1;
  border: 1px solid #adadad;
  font-size: 11px;
}
.group > .pen.wide { width: 127px; }
.pen .arrow { margin-left: auto; }
.arrow { border: 4px solid transparent; border-top-color: #000; border-bottom: 0; }
.swatch { width: 16px; height: 12px; background: #000; }
.rule { width: 16px; height: 7px; border: solid #fff; border-width: 3px 0; background: #888; }

.toolbar.pens .group { padding-top: 1px; }
.group.scalebar { padding-right: 3px; }
.scale { position: relative; }
.scale select {
  display: block;
  appearance: none;
  width: 110px;
  height: 21px;
  padding: 0 5px;
  border: 1px solid #7a7a7a;
  border-radius: 0;
  background: #fff;
  font: 11px/15px "DejaVu Sans Condensed", "DejaVu Sans", sans-serif;
}
.scale svg { position: absolute; right: 4px; top: 6px; width: 10px; height: 10px; }
.fixed { display: flex; align-items: center; gap: 5px; width: 70px; padding-left: 8px; font: 11px/15px "DejaVu Sans Condensed", "DejaVu Sans", sans-serif; }
.fixed input { appearance: none; width: 13px; height: 13px; margin: 0; border: 1px solid #333; background: #fff; }
.group > .box { width: 25px; height: 24px; margin-right: 10px; background: #e1e1e1; border: 1px solid #adadad; }
.group > .box.checked { background: #cce4f7; border-color: #005499; }
.group > .box.focus { border-color: #0078d7; }
.endsep { width: 1px; height: 26px; background: #999; }

.work { display: flex; flex: 1; min-height: 0; }
.tools { width: 35px; }
.tools > i { display: block; }
.tools button { display: flex; align-items: flex-end; width: 30px; height: 30px; padding: 0 0 4px 5px; }
.tools svg { width: 24px; height: 24px; }
.tools .arrow { border-width: 3px 3px 0; margin-left: -5px; }

.canvas {
  display: flex;
  align-items: center;
  justify-content: center;
  flex: 1;
  min-width: 0;
  overflow: hidden;
  background: #c8c8c8;
  border: 1px solid #828790;
}
.ink { fill: none; stroke: #000; stroke-width: 1; shape-rendering: crispEdges; }
.cadtext { font: 9px "DejaVu Sans Mono", monospace; }
.cadtext.small { font-size: 7px; font-weight: bold; }

.docks {
  display: flex;
  flex-direction: column;
  gap: 6px;
  width: 264px;
  padding: 1px 0 0 4px;
}
.docks h2 {
  display: flex;
  justify-content: space-between;
  align-items: center;
  height: 19px;
  margin: 0;
  padding: 2px 2px 0 3px;
  background: #d9d9d9;
  border: 1px solid #c0c0c0;
  font: 11px/15px "DejaVu Sans Condensed", "DejaVu Sans", sans-serif;
}
.docks h2 span { display: flex; gap: 4px; padding-bottom: 2px; }
.docks h2 svg { width: 12px; height: 12px; }
.layers { padding: 4px 2px 0; }
.filter { display: block; width: 100%; height: 20px; border: 1px solid #7a7a7a; background: #fff; }
.actions { display: flex; gap: 23px; padding: 7px 16px; }
.actions button { display: grid; place-items: center; width: 26px; height: 26px; background: #e1e1e1; border: 1px solid #adadad; }
.actions svg { width: 16px; height: 16px; }

.list { display: flex; height: 192px; overflow: hidden; background: #fff; border: 1px solid #828790; }
.list table { flex: 1; width: 100%; height: 207px; table-layout: fixed; border-collapse: collapse; font-size: 12px; }
.list tr { height: 23px; }
.list td { width: 24px; padding: 0 1px 0 0; border: solid #d8d8d8; border-width: 0 1px 1px 0; }
.list td:last-child { width: auto; padding-left: 3px; }
.list td svg { width: 16px; height: 16px; margin: auto; }
.list td i { display: block; width: 16px; height: 16px; margin: auto; background: #000; }
.list .current td:last-child { background: #f0f0f0; }
.scroll { display: flex; flex-direction: column; align-items: center; gap: 4px; width: 17px; padding: 4px 0; background: #f0f0f0; }
.scroll svg { width: 9px; height: 9px; }
.scroll i { width: 15px; height: 138px; margin-bottom: auto; background: #cdcdcd; }

.tabs { display: flex; align-items: flex-start; height: 23px; padding: 2px 2px 0; }
.tabs button { height: 19px; width: 98px; border: solid #d9d9d9; border-width: 0 1px 1px; font: 11px/15px "DejaVu Sans Condensed", "DejaVu Sans", sans-serif; }
.tabs button + button { width: 65px; border-left: 0; }
.tabs .active.active { width: 71px; height: 21px; background: #fff; }

.command { display: flex; flex: 1; flex-direction: column; min-height: 0; font: 11px/13px "DejaVu Sans Condensed", "DejaVu Sans", sans-serif; }
.log { flex: 1; margin-top: 1px; padding: 5px 3px; background: #fff; border: 1px solid #7a7a7a; white-space: nowrap; overflow: hidden; }
.command label { height: 14px; padding-top: 1px; }
.command input { height: 18px; border: 0; border-top: 1px solid #999; background: #fff; }

.toolbar.snap { height: 34px; border: 0; }
.ex { font-size: 14px; }
.snap .group { padding-right: 1px; }

.status { display: flex; align-items: center; height: 35px; font-size: 11px; }
.status > div { height: 32px; padding: 1px 0 0 5px; border-right: 1px solid #d4d4d4; white-space: nowrap; }
.status .coord { width: 192px; padding-left: 6px; }
.status .mouse { display: grid; place-items: center; flex: 0 1 306px; padding-top: 0; }
.mouse svg { width: 24px; height: 24px; }
.status .sel { display: grid; grid-template-columns: 47px 1fr; width: 121px; }
.status .layer { width: 118px; }
.status .gridst { width: 71px; padding-left: 8px; }
.status .rest { display: flex; flex: 1; justify-content: flex-end; align-items: flex-end; border: 0; }
.rest svg { width: 12px; height: 12px; }
```
